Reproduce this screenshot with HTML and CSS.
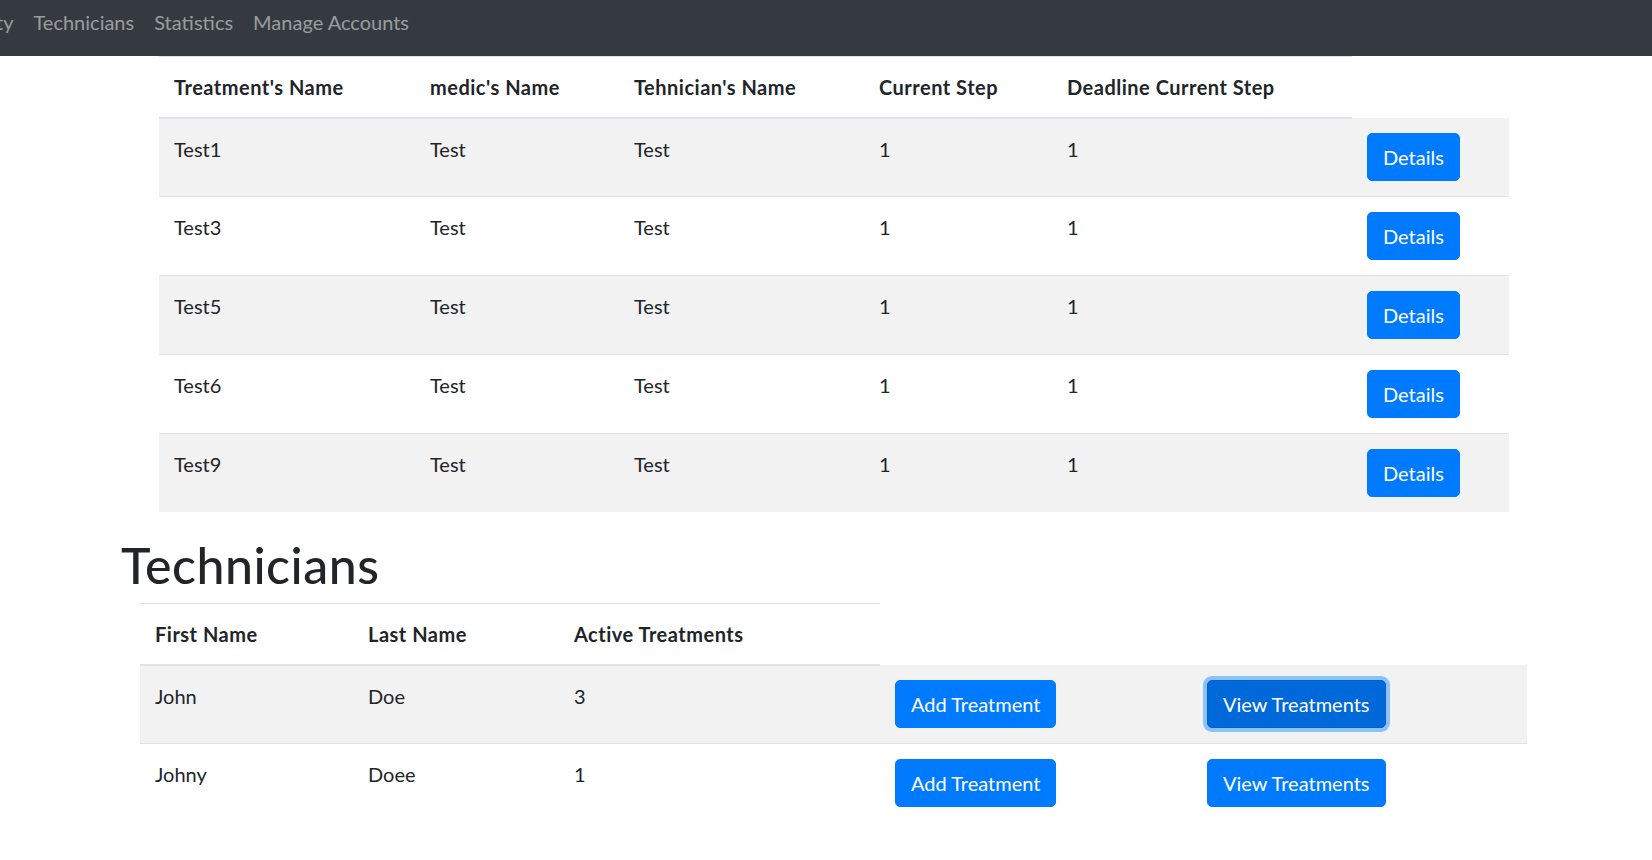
FILE: index.html
```html
<!DOCTYPE html>
<html lang="en">
<head>
<meta charset="utf-8">
<title>Treatments</title>
<link rel="stylesheet" href="styles.css">
</head>
<body>
<nav class="navbar">
  <ul class="nav-list">
    <li><a class="nav-link first" href="#">ty</a></li>
    <li><a class="nav-link" href="#">Technicians</a></li>
    <li><a class="nav-link" href="#">Statistics</a></li>
    <li><a class="nav-link" href="#">Manage Accounts</a></li>
  </ul>
</nav>

<main class="content">
  <table class="table table-treatments">
    <colgroup>
      <col class="c1"><col class="c2"><col class="c3"><col class="c4"><col class="c5"><col class="c6">
    </colgroup>
    <thead>
      <tr>
        <th>Treatment's Name</th>
        <th>medic's Name</th>
        <th>Tehnician's Name</th>
        <th>Current Step</th>
        <th>Deadline Current Step</th>
      </tr>
    </thead>
    <tbody>
      <tr class="odd"><td>Test1</td><td>Test</td><td>Test</td><td>1</td><td>1</td><td><a class="btn" href="#">Details</a></td></tr>
      <tr><td>Test3</td><td>Test</td><td>Test</td><td>1</td><td>1</td><td><a class="btn" href="#">Details</a></td></tr>
      <tr class="odd"><td>Test5</td><td>Test</td><td>Test</td><td>1</td><td>1</td><td><a class="btn" href="#">Details</a></td></tr>
      <tr><td>Test6</td><td>Test</td><td>Test</td><td>1</td><td>1</td><td><a class="btn" href="#">Details</a></td></tr>
      <tr class="odd"><td>Test9</td><td>Test</td><td>Test</td><td>1</td><td>1</td><td><a class="btn" href="#">Details</a></td></tr>
    </tbody>
  </table>

  <h1 class="section-title">Technicians</h1>

  <table class="table table-technicians">
    <colgroup>
      <col class="t1"><col class="t2"><col class="t3"><col class="t4"><col class="t5">
    </colgroup>
    <thead>
      <tr>
        <th>First Name</th>
        <th>Last Name</th>
        <th>Active Treatments</th>
      </tr>
    </thead>
    <tbody>
      <tr class="odd"><td>John</td><td>Doe</td><td>3</td><td><a class="btn" href="#">Add Treatment</a></td><td><a class="btn focus" href="#">View Treatments</a></td></tr>
      <tr><td>Johny</td><td>Doee</td><td>1</td><td><a class="btn" href="#">Add Treatment</a></td><td><a class="btn" href="#">View Treatments</a></td></tr>
    </tbody>
  </table>
</main>
</body>
</html>
```

FILE: styles.css
```css
html, body {
  margin: 0;
  padding: 0;
  background: #fff;
}

body {
  font-family: "Segoe UI", Lato, "Noto Sans", sans-serif;
  font-size: 20px;
  line-height: 30px;
  color: #212529;
  overflow: hidden;
}

.navbar {
  height: 56px;
  background: #343a40;
  box-sizing: border-box;
  padding-top: 7px;
}

.nav-list {
  display: flex;
  margin: 0;
  padding: 0;
  list-style: none;
}

.nav-link {
  display: block;
  padding: 0 10px;
  color: rgba(255, 255, 255, 0.5);
  text-decoration: none;
  line-height: 30px;
}

.nav-link.first {
  padding-left: 0;
  margin-left: -4px;
}

.content {
  display: flex;
  flex-direction: column;
  align-items: flex-start;
}

.table {
  border-collapse: collapse;
  table-layout: fixed;
  margin-bottom: 20px;
}

.table th,
.table td {
  padding: 15px;
  text-align: left;
  vertical-align: top;
  border-top: 1px solid #dee2e6;
}

.table th {
  font-weight: 700;
  letter-spacing: 0.5px;
  border-bottom: 2px solid #dee2e6;
}

.table tbody tr:first-child td {
  border-top: none;
}

.table tr.odd td {
  background: #f2f2f2;
}

.table-treatments {
  margin-left: 159px;
  width: 1350px;
}

.c1 { width: 256px; }
.c2 { width: 204px; }
.c3 { width: 245px; }
.c4 { width: 188px; }
.c5 { width: 300px; }
.c6 { width: 157px; }

.section-title {
  margin: 3px 0 8px 121px;
  font-size: 50px;
  line-height: 60px;
  font-weight: 500;
  letter-spacing: 0.5px;
}

.table-technicians {
  margin-left: 140px;
  width: 1387px;
}

.t1 { width: 213px; }
.t2 { width: 206px; }
.t3 { width: 321px; }
.t4 { width: 312px; }
.t5 { width: 335px; }

.btn {
  display: inline-block;
  padding: 8px 15px;
  font-size: 20px;
  line-height: 30px;
  color: #fff;
  background: #007bff;
  border: 1px solid #007bff;
  border-radius: 5px;
  text-decoration: none;
  vertical-align: top;
}

.btn.focus {
  background: #0069d9;
  border-color: #0062cc;
  box-shadow: 0 0 0 4px rgba(38, 143, 255, 0.5);
}
```
